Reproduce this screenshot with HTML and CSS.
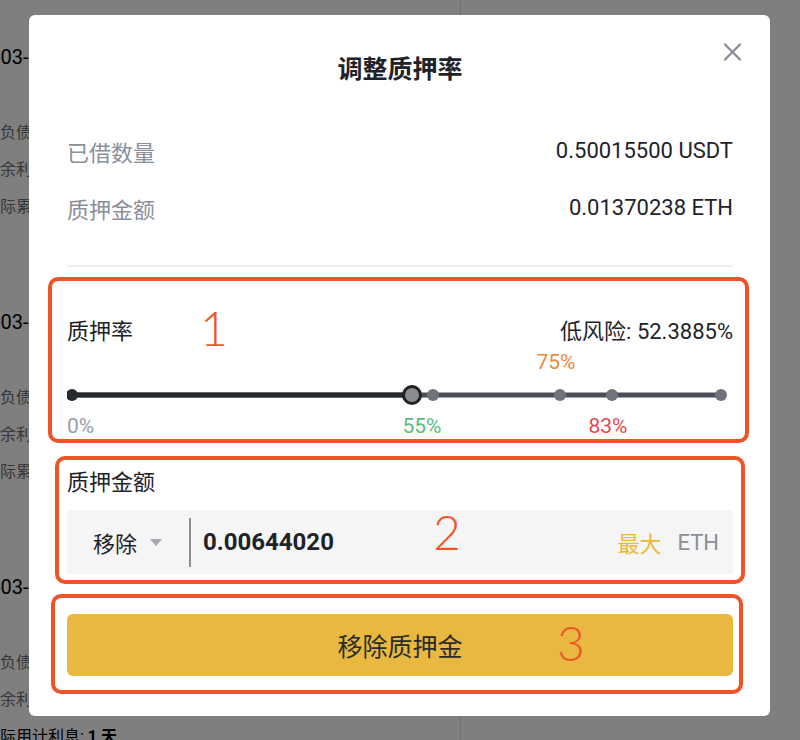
FILE: index.html
```html
<!DOCTYPE html>
<html lang="zh-CN">
<head>
    <meta charset="UTF-8">
    <meta name="viewport" content="width=device-width, initial-scale=1.0">
    <title>调整质押率</title>
    <link rel="stylesheet" href="styles.css">
</head>
<body>
    <!-- Page behind the dialog -->
    <div class="page">
        <div class="loan-list">
            <div class="loan-card">
                <div class="loan-date">2023-03-15 14:20:11</div>
                <div class="loan-rows">
                    <div class="loan-row">总负债</div>
                    <div class="loan-row">剩余利息</div>
                    <div class="loan-row">实际累计利息</div>
                </div>
            </div>
            <div class="loan-card">
                <div class="loan-date">2023-03-14 09:02:45</div>
                <div class="loan-rows">
                    <div class="loan-row">总负债</div>
                    <div class="loan-row">剩余利息</div>
                    <div class="loan-row">实际累计利息</div>
                </div>
            </div>
            <div class="loan-card">
                <div class="loan-date">2023-03-10 18:37:02</div>
                <div class="loan-rows">
                    <div class="loan-row">总负债</div>
                    <div class="loan-row">剩余利息</div>
                    <div class="loan-row loan-row-dark">实际用计利息: <b>1 天</b></div>
                </div>
            </div>
        </div>
        <div class="loan-side"></div>
    </div>

    <div class="mask"></div>

    <!-- Adjust LTV dialog -->
    <div class="modal">
        <div class="modal-head">调整质押率</div>
        <svg class="modal-close" width="19" height="20" viewBox="0 0 19 20">
            <path d="M2 2.5 L17 17.5 M17 2.5 L2 17.5" stroke="#8a8f99" stroke-width="2.4" stroke-linecap="round" fill="none"/>
        </svg>

        <div class="info">
            <div class="info-row">
                <span class="info-label">已借数量</span>
                <span>0.50015500 USDT</span>
            </div>
            <div class="info-row">
                <span class="info-label">质押金额</span>
                <span>0.01370238 ETH</span>
            </div>
        </div>
        <div class="divider"></div>

        <div class="mark mark-rate">
            <div class="rate-head">
                <span>质押率</span>
                <span>低风险: 52.3885%</span>
            </div>
            <div class="tick-row tick-row-top">
                <span class="tick tick-orange tick-75">75%</span>
            </div>
            <svg class="slider" width="666" height="24" viewBox="0 0 666 24">
                <line x1="5" y1="12" x2="654" y2="12" stroke="#4b4f57" stroke-width="5"/>
                <line x1="5" y1="12" x2="345" y2="12" stroke="#252a2e" stroke-width="5"/>
                <circle cx="5" cy="12" r="6" fill="#252a2e"/>
                <circle cx="366" cy="12" r="6" fill="#707379"/>
                <circle cx="493" cy="12" r="6" fill="#707379"/>
                <circle cx="545" cy="12" r="6" fill="#707379"/>
                <circle cx="654" cy="12" r="6" fill="#707379"/>
                <circle cx="345" cy="12" r="8.5" fill="#8b8c8e" stroke="#1f2326" stroke-width="3"/>
            </svg>
            <div class="tick-row">
                <span class="tick tick-grey tick-0">0%</span>
                <span class="tick tick-green tick-55">55%</span>
                <span class="tick tick-red tick-83">83%</span>
            </div>
            <span class="mark-num num-1">1</span>
        </div>

        <div class="mark mark-amount">
            <div class="amount-label">质押金额</div>
            <div class="amount-input">
                <span>移除</span>
                <svg class="caret" width="12" height="7" viewBox="0 0 12 7">
                    <path d="M0 0 L12 0 L6 7 Z" fill="#a5a9b0"/>
                </svg>
                <span class="amount-sep"></span>
                <span class="amount-value">0.00644020</span>
                <span class="amount-max">最大</span>
                <span class="amount-unit">ETH</span>
            </div>
            <span class="mark-num num-2">2</span>
        </div>

        <div class="mark mark-submit">
            <button type="button" class="submit-btn">移除质押金</button>
            <span class="mark-num num-3">3</span>
        </div>
    </div>
</body>
</html>
```

FILE: styles.css
```css
body { margin: 0; overflow: hidden; background: #fff; color: #1e2329; font-family: Roboto, "Noto Sans CJK SC", sans-serif; }

/* background page */
.page { display: flex; height: 740px; overflow: hidden; }
.loan-list { width: 460px; border-right: 1px solid #e2e2e2; }
.loan-card { height: 265px; padding-top: 45px; box-sizing: border-box; }
.loan-date { font-size: 20px; line-height: 24px; margin-left: -50px; color: #000; white-space: nowrap; }
.loan-rows { margin-top: 45px; }
.loan-row { font-size: 16px; line-height: 37px; margin-left: -16px; color: #707070; white-space: nowrap; }
.loan-row-dark { color: #000; }
.loan-side { flex: 1; }

.mask { position: fixed; top: 0; left: 0; right: 0; bottom: 0; background: rgba(0, 0, 0, 0.5); }

/* dialog */
.modal { position: fixed; left: 29px; top: 15px; width: 741px; height: 701px; box-sizing: border-box; padding: 0 37px 0 38px; background: #fff; border-radius: 6px; }
.modal-head { padding-top: 40px; line-height: 30px; font-size: 25px; font-weight: 700; text-align: center; }
.modal-close { position: absolute; right: 28px; top: 27px; }

.info { padding: 37px 0 29px; }
.info-row { display: flex; justify-content: space-between; align-items: center; height: 57px; font-size: 22px; }
.info-label { color: #8a8f99; }
.divider { height: 2px; background: #eeeff2; }

.mark { position: relative; border: 4px solid #ef5428; border-radius: 10px; }
.mark-num { position: absolute; font-family: Lato, "Liberation Sans", sans-serif; font-weight: 300; font-size: 48px; line-height: 48px; color: #f0552a; pointer-events: none; }
.num-1 { left: 148px; top: 23px; }
.num-2 { left: 374px; top: 48px; }
.num-3 { left: 502px; top: 21px; }

.mark-rate { margin: 10px -16px 0 -19px; padding: 36px 12px 2px 15px; }
.rate-head { display: flex; justify-content: space-between; line-height: 30px; font-size: 22px; }
.tick-row { position: relative; height: 22px; margin-top: 8px; }
.tick-row-top { margin-top: 4px; }
.tick { position: absolute; top: 0; line-height: 22px; font-size: 21px; transform: translateX(-50%); }
.tick-0 { left: 0; transform: none; }
.tick-55 { left: 355px; }
.tick-75 { left: 489px; }
.tick-83 { left: 541px; }
.tick-grey { color: #9a9ea6; }
.tick-green { color: #58bd7d; }
.tick-orange { color: #f0883a; }
.tick-red { color: #e5484d; }
.slider { display: block; margin-top: 10px; }

.mark-amount { margin: 13px -12px 0 -12px; padding: 8px 8px 6px 8px; }
.amount-label { line-height: 30px; font-size: 22px; }
.amount-input { display: flex; align-items: center; height: 64px; margin-top: 12px; padding: 0 14px 0 26px; background: #f5f5f5; border-radius: 4px; font-size: 22px; }
.caret { margin-left: 13px; }
.amount-sep { width: 2px; height: 49px; margin-left: 27px; background: #8a8f99; }
.amount-value { flex: 1; margin-left: 12px; font-size: 24px; font-weight: 700; }
.amount-max { color: #ecb935; }
.amount-unit { margin-left: 16px; color: #8a8f99; }

.mark-submit { margin: 10px -10px 0 -16px; padding: 16px 6px 14px 12px; }
.submit-btn { display: block; width: 100%; height: 62px; border: none; border-radius: 6px; background: #e8b841; color: #2b2b2b; font-family: inherit; font-size: 25px; }
```
